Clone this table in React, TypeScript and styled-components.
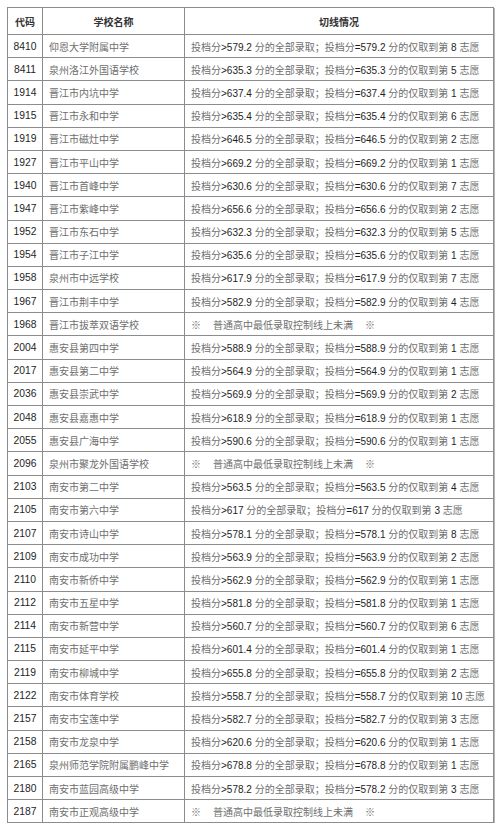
import React, { FC } from "react";
import styled, { createGlobalStyle } from "styled-components";

const GlobalStyle = createGlobalStyle`
  html, body {
    margin: 0;
    padding: 0;
    background: #fff;
  }
  body {
    font-family: "Liberation Sans", "Noto Sans CJK SC", sans-serif;
  }
`;

type Row = [string, string, string | null, string];

const rows: Row[] = [
  ["8410", "仰恩大学附属中学", "579.2", "8"],
  ["8411", "泉州洛江外国语学校", "635.3", "5"],
  ["1914", "晋江市内坑中学", "637.4", "1"],
  ["1915", "晋江市永和中学", "635.4", "6"],
  ["1919", "晋江市磁灶中学", "646.5", "2"],
  ["1927", "晋江市平山中学", "669.2", "1"],
  ["1940", "晋江市首峰中学", "630.6", "7"],
  ["1947", "晋江市紫峰中学", "656.6", "2"],
  ["1952", "晋江市东石中学", "632.3", "5"],
  ["1954", "晋江市子江中学", "635.6", "1"],
  ["1958", "泉州市中远学校", "617.9", "7"],
  ["1967", "晋江市荆丰中学", "582.9", "4"],
  ["1968", "晋江市拔萃双语学校", null, ""],
  ["2004", "惠安县第四中学", "588.9", "1"],
  ["2017", "惠安县第二中学", "564.9", "1"],
  ["2036", "惠安县崇武中学", "569.9", "2"],
  ["2048", "惠安县嘉惠中学", "618.9", "1"],
  ["2055", "惠安县广海中学", "590.6", "1"],
  ["2096", "泉州市聚龙外国语学校", null, ""],
  ["2103", "南安市第二中学", "563.5", "4"],
  ["2105", "南安市第六中学", "617", "3"],
  ["2107", "南安市诗山中学", "578.1", "8"],
  ["2109", "南安市成功中学", "563.9", "2"],
  ["2110", "南安市新侨中学", "562.9", "1"],
  ["2112", "南安市五星中学", "581.8", "1"],
  ["2114", "南安市新营中学", "560.7", "6"],
  ["2115", "南安市延平中学", "601.4", "1"],
  ["2119", "南安市柳城中学", "655.8", "2"],
  ["2122", "南安市体育学校", "558.7", "10"],
  ["2157", "南安市宝莲中学", "582.7", "3"],
  ["2158", "南安市龙泉中学", "620.6", "1"],
  ["2165", "泉州师范学院附属鹏峰中学", "678.8", "1"],
  ["2180", "南安市蓝园高级中学", "578.2", "3"],
  ["2187", "南安市正观高级中学", null, ""],
];

const Page = styled.div`
  padding: 7px 7px 0 7px;
`;

const Table = styled.table`
  width: 486px;
  table-layout: fixed;
  border-collapse: collapse;
  border: 1px solid #8c8c8c;
  box-shadow: 1px 1px 0 #b5b5b5;
  font-size: 10px;
`;

const HeadCell = styled.th`
  height: 26px;
  padding: 0;
  border: 1px solid #8c8c8c;
  text-align: center;
  font-weight: 700;
  color: #333;
  font-size: 10px;
`;

const Cell = styled.td<{ $align?: "center" | "left" }>`
  height: 22.2px;
  padding: 0 0 0 ${(p) => (p.$align === "center" ? 0 : 6)}px;
  border: 1px solid #8c8c8c;
  text-align: ${(p) => p.$align ?? "left"};
  white-space: nowrap;
  overflow: visible;
  color: #6e6e6e;
  vertical-align: middle;
`;

const Code = styled.span`
  color: #1e1e1e;
  font-size: 10.3px;
`;

const Num = styled.span`
  color: #1e1e1e;
`;

const Note = styled.span`
  display: inline-flex;
  gap: 12px;
  color: #6e6e6e;
`;

const Detail: FC<{ score: string | null; choice: string }> = ({
  score,
  choice,
}) => {
  if (score === null) {
    return (
      <Note>
        <span>※</span>
        <span>普通高中最低录取控制线上未满</span>
        <span>※</span>
      </Note>
    );
  }
  return (
    <>
      投档分<Num>&gt;{score}</Num> 分的全部录取；投档分
      <Num>={score}</Num> 分的仅取到第 <Num>{choice}</Num> 志愿
    </>
  );
};

const App: FC = () => {
  return (
    <Page>
      <GlobalStyle />
      <Table>
        <colgroup>
          <col style={{ width: 35 }} />
          <col style={{ width: 142 }} />
          <col style={{ width: 309 }} />
        </colgroup>
        <thead>
          <tr>
            <HeadCell>代码</HeadCell>
            <HeadCell>学校名称</HeadCell>
            <HeadCell>切线情况</HeadCell>
          </tr>
        </thead>
        <tbody>
          {rows.map(([code, name, score, choice]) => (
            <tr key={code}>
              <Cell $align="center">
                <Code>{code}</Code>
              </Cell>
              <Cell>{name}</Cell>
              <Cell>
                <Detail score={score} choice={choice} />
              </Cell>
            </tr>
          ))}
        </tbody>
      </Table>
    </Page>
  );
};

export default App;
